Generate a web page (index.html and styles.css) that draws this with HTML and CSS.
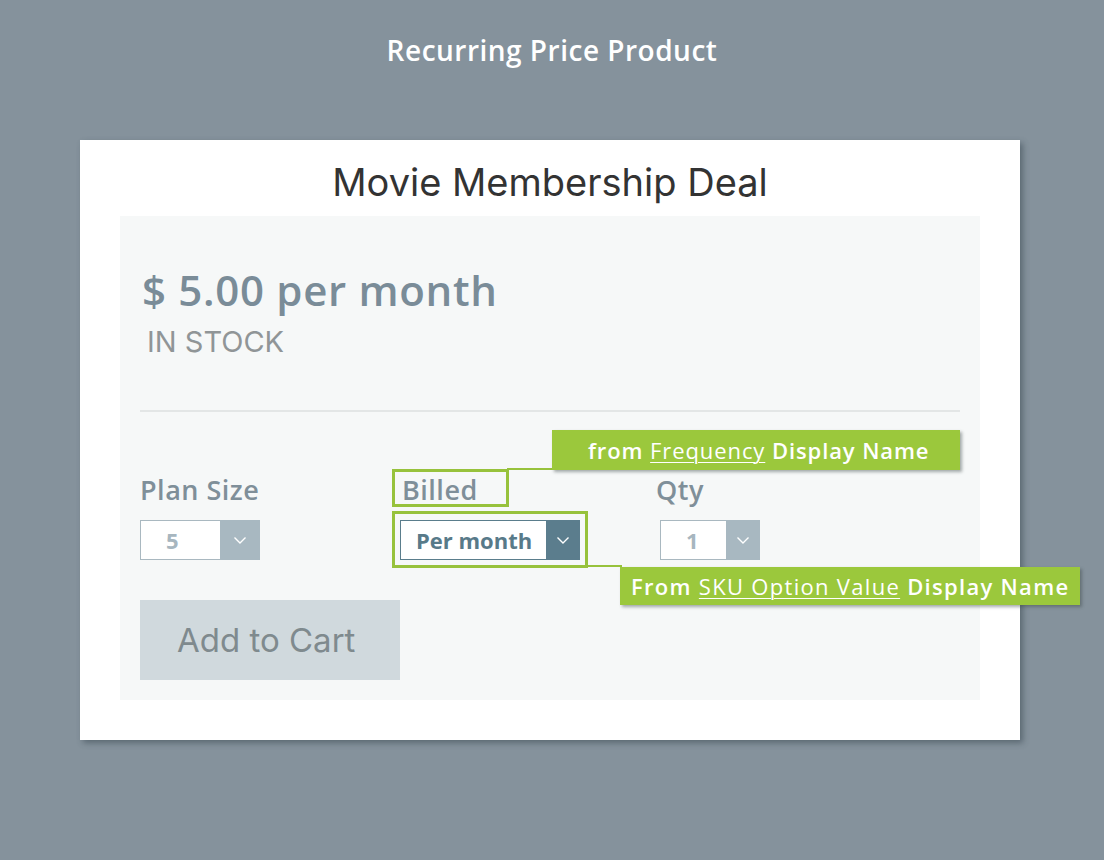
FILE: index.html
```html
<!DOCTYPE html>
<html>
<head>
<meta charset="utf-8">
<link rel="stylesheet" href="styles.css">
</head>
<body>
<h1 class="page-title">Recurring Price Product</h1>
<div class="card">
  <h2 class="card-title">Movie Membership Deal</h2>
  <div class="panel">
    <div class="price">$ 5.00 per month</div>
    <div class="stock">IN STOCK</div>
    <div class="divider"></div>
    <div class="options">
      <div class="option option-plan">
        <div class="label">Plan Size</div>
        <div class="select select-light select-plan">
          <span class="select-value">5</span>
          <span class="select-arrow"><svg width="14" height="9" viewBox="0 0 14 9"><path d="M1.5 1.5 L7 7 L12.5 1.5" fill="none" stroke="#fff" stroke-width="1.4"/></svg></span>
        </div>
      </div>
      <div class="option option-billed">
        <div class="label">Billed</div>
        <div class="select select-dark">
          <span class="select-value">Per month</span>
          <span class="select-arrow"><svg width="14" height="9" viewBox="0 0 14 9"><path d="M1.5 1.5 L7 7 L12.5 1.5" fill="none" stroke="#fff" stroke-width="1.4"/></svg></span>
        </div>
        <div class="hl hl-label"></div>
        <div class="hl hl-select"></div>
        <div class="connector connector-top"></div>
        <div class="connector connector-bottom"></div>
        <div class="callout callout-top"><b>from</b> <u>Frequency</u> <b>Display Name</b></div>
        <div class="callout callout-bottom"><b>From</b> <u>SKU Option Value</u> <b>Display Name</b></div>
      </div>
      <div class="option option-qty">
        <div class="label">Qty</div>
        <div class="select select-light select-qty">
          <span class="select-value">1</span>
          <span class="select-arrow"><svg width="14" height="9" viewBox="0 0 14 9"><path d="M1.5 1.5 L7 7 L12.5 1.5" fill="none" stroke="#fff" stroke-width="1.4"/></svg></span>
        </div>
      </div>
    </div>
    <div class="cart-btn">Add to Cart</div>
  </div>
</div>
</body>
</html>
```

FILE: styles.css
```css
* { box-sizing: border-box; }
html, body { margin: 0; padding: 0; }
body {
  background: #85929c;
  font-family: "Open Sans", "Liberation Sans", sans-serif;
  height: 860px;
  overflow: hidden;
}
.page-title {
  margin: 0;
  padding-top: 30px;
  height: 140px;
  line-height: 40px;
  text-align: center;
  color: #fff;
  font-size: 28px;
  letter-spacing: 0.5px;
  font-weight: 600;
}
.card {
  width: 940px;
  margin-left: 80px;
  background: #fff;
  padding: 0 40px 40px;
  box-shadow: 3px 3px 6px rgba(40, 55, 65, 0.45);
}
.card-title {
  margin: 0;
  padding-top: 8px;
  line-height: 68px;
  text-align: center;
  font-family: Inter, "Liberation Sans", sans-serif;
  font-weight: 400;
  font-size: 38px;
  color: #333;
}
.panel {
  background: #f6f8f8;
  padding: 50px 20px 20px;
}
.price {
  font-size: 42px;
  font-weight: 600;
  letter-spacing: 0.7px;
  color: #7a8c98;
  line-height: 48px;
  padding-left: 2px;
}
.stock {
  font-family: Inter, "Liberation Sans", sans-serif;
  font-size: 29px;
  color: #909597;
  line-height: 40px;
  padding-left: 7px;
  margin-top: 8px;
}
.divider {
  height: 2px;
  background: #e3e6e6;
  margin-top: 48px;
}
.options {
  display: flex;
  margin-top: 58px;
}
.option { position: relative; }
.option-plan, .option-billed { width: 260px; }
.option-qty { margin-left: -4px; }
.option-qty .select { margin-left: 4px; }
.label {
  font-size: 27px;
  font-weight: 600;
  letter-spacing: 0.5px;
  color: #7f8f99;
  line-height: 40px;
  height: 40px;
  margin-bottom: 10px;
}
.option-billed .label { padding-left: 2px; }
.select {
  display: flex;
  height: 40px;
  font-size: 22px;
  font-weight: 700;
}
.select-value {
  display: flex;
  align-items: center;
  background: #fff;
}
.select-arrow {
  display: flex;
  align-items: center;
  justify-content: center;
}
.select-light .select-value {
  border: 1px solid #a9b8c0;
  border-right: none;
  color: #a7b6bf;
  padding-left: 25px;
}
.select-light .select-arrow { background: #a8b8c1; width: 40px; }
.select-plan .select-value { width: 80px; }
.select-qty .select-value { width: 66px; }
.select-qty .select-arrow { width: 34px; }
.select-dark { width: 180px; }
.select-dark .select-value {
  width: 146px;
  border: 1px solid #5a7d8c;
  border-right: none;
  color: #587a89;
  padding-left: 15px;
}
.select-dark .select-arrow { background: #5b7d8d; width: 34px; }
.hl {
  position: absolute;
  border: 3px solid #97c23c;
}
.hl-label { left: -8px; top: -1px; width: 117px; height: 38px; }
.hl-select { left: -8px; top: 41px; width: 196px; height: 57px; }
.connector { position: absolute; background: #97c23c; height: 2px; }
.connector-top { left: 107px; top: -2px; width: 48px; }
.connector-bottom { left: 186px; top: 95px; width: 36px; }
.callout {
  position: absolute;
  background: #9bc83c;
  color: #fff;
  font-size: 22px;
  letter-spacing: 0.9px;
  white-space: nowrap;
  box-shadow: 2px 2px 3px rgba(60, 70, 70, 0.45);
}
.callout b { font-weight: 600; }
.callout u { font-weight: 400; text-decoration-thickness: 1px; text-underline-offset: 3px; }
.callout-top {
  left: 152px; top: -40px;
  width: 408px; height: 40px;
  line-height: 40px;
  padding-left: 36px;
}
.callout-bottom {
  left: 220px; top: 97px;
  width: 460px; height: 38px;
  line-height: 38px;
  padding-left: 11px;
  letter-spacing: 1.3px;
}
.cart-btn {
  margin-top: 40px;
  width: 260px;
  height: 80px;
  background: #d0d9dd;
  color: #7f8a8e;
  font-family: Inter, "Liberation Sans", sans-serif;
  font-size: 33px;
  line-height: 80px;
  padding-left: 37px;
}
```
